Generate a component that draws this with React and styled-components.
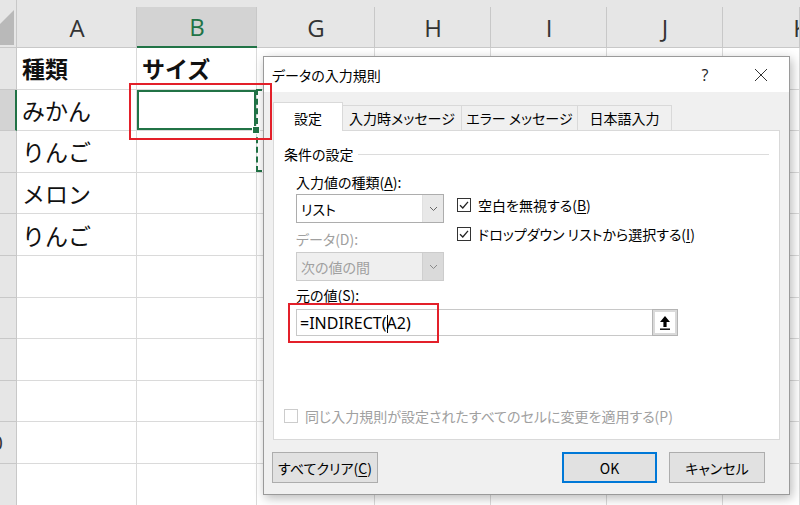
import React from 'react';
import styled, { createGlobalStyle, css } from 'styled-components';

const GlobalStyle = createGlobalStyle`
  html, body { margin: 0; padding: 0; background: #fff; overflow: hidden; }
`;

const Screen = styled.div`
  position: relative;
  width: 800px;
  height: 505px;
  overflow: hidden;
  font-family: "Noto Sans CJK JP", "Noto Sans", sans-serif;
`;

// ---- spreadsheet ----
const Sheet = styled.div`
  display: grid;
  grid-template-columns: 17px 120px 120px 118px 116px 116px 116px 1fr;
  grid-template-rows: 48px repeat(11, 41.6px);
`;

const Corner = styled.div`
  background: #e6e6e6;
  border-right: 1px solid #c8c8c8;
  border-bottom: 1px solid #c8c8c8;
  box-sizing: border-box;
  svg { display: block; }
`;

const ColHead = styled.div`
  position: relative;
  display: flex;
  align-items: center;
  justify-content: center;
  padding-top: 7px;
  box-sizing: border-box;
  background: linear-gradient(#e6e6e6 7px, ${p => (p.$active ? '#d3d3d3' : '#e6e6e6')} 7px);
  border-bottom: ${p => (p.$active ? '2px solid #217346' : '1px solid #c8c8c8')};
  color: ${p => (p.$active ? '#217346' : '#333')};
  font: 24px "Open Sans", "Liberation Sans", sans-serif;
  &::after {
    content: '';
    position: absolute;
    right: 0;
    top: 7px;
    bottom: 0;
    width: 1px;
    background: #c8c8c8;
  }
`;

const RowHead = styled.div`
  display: flex;
  align-items: center;
  justify-content: flex-end;
  padding-right: 13px;
  overflow: hidden;
  white-space: nowrap;
  box-sizing: border-box;
  background: ${p => (p.$active ? '#d3d3d3' : '#e6e6e6')};
  border-bottom: 1px solid #c8c8c8;
  border-right: ${p => (p.$active ? '2px solid #217346' : '1px solid #c8c8c8')};
  font: 20px "Open Sans", "Liberation Sans", sans-serif;
  color: #333;
`;

const Cell = styled.div`
  position: relative;
  display: flex;
  align-items: center;
  padding-left: 5px;
  box-sizing: border-box;
  border-right: 1px solid #dadada;
  border-bottom: 1px solid #dadada;
  font-size: 23px;
  font-weight: ${p => (p.$bold ? 700 : 400)};
  color: #111;
  white-space: nowrap;
  ${p => p.$selected && css`
    box-shadow: inset 0 0 0 2px #217346;
    &::after {
      content: '';
      position: absolute;
      right: -4px;
      bottom: -4px;
      width: 6px;
      height: 6px;
      background: #217346;
      border: 1px solid #fff;
      z-index: 2;
    }
  `}
`;

const Marquee = styled.div`
  position: absolute;
  left: 256px;
  top: 89px;
  width: 130px;
  height: 83px;
  border: 2px dashed #217346;
  box-sizing: border-box;
`;

const RedBox = styled.div`
  position: absolute;
  left: ${p => p.$x}px;
  top: ${p => p.$y}px;
  width: ${p => p.$w}px;
  height: ${p => p.$h}px;
  border: 2px solid #e3202a;
  box-sizing: border-box;
  z-index: 5;
`;

// ---- dialog ----
const Dialog = styled.div`
  position: absolute;
  left: 263px;
  top: 56px;
  width: 527px;
  height: 439px;
  box-sizing: border-box;
  border: 1px solid #9a9a9a;
  background: #f0f0f0;
  box-shadow: 2px 3px 10px rgba(0, 0, 0, 0.28);
  display: flex;
  flex-direction: column;
  font-size: 14px;
  font-feature-settings: "palt";
  color: #000;
  z-index: 3;
`;

const TitleBar = styled.div`
  height: 35px;
  background: #fff;
  display: flex;
  align-items: center;
  padding-left: 8px;
  flex-shrink: 0;
`;

const Title = styled.div`
  flex: 1;
  font-size: 14px;
`;

const TitleBtn = styled.div`
  width: 56px;
  height: 35px;
  display: flex;
  align-items: center;
  justify-content: center;
  font: 16px "Open Sans", sans-serif;
  color: #222;
`;

const Body = styled.div`
  flex: 1;
  display: flex;
  flex-direction: column;
  padding: 11px 9px 10px 9px;
`;

const Tabs = styled.div`
  display: flex;
  align-items: flex-end;
  height: 28px;
  position: relative;
  z-index: 1;
  margin-bottom: -1px;
`;

const Tab = styled.div`
  width: ${p => p.$w}px;
  height: ${p => (p.$active ? 29 : 26)}px;
  box-sizing: border-box;
  display: flex;
  align-items: center;
  justify-content: center;
  background: ${p => (p.$active ? '#fff' : '#f0f0f0')};
  border: 1px solid #d9d9d9;
  border-bottom: ${p => (p.$active ? 'none' : '1px solid #d9d9d9')};
  border-left-width: ${p => (p.$first ? 1 : 0)}px;
  font-size: 14px;
  padding-top: ${p => (p.$active ? 1 : 0)}px;
`;

const Panel = styled.div`
  height: 310px;
  box-sizing: border-box;
  background: #fff;
  border: 1px solid #d9d9d9;
  padding: 13px 10px 13px 10px;
  display: flex;
  flex-direction: column;
`;

const GroupTitle = styled.div`
  display: flex;
  align-items: center;
  gap: 4px;
  height: 20px;
  &::after {
    content: '';
    flex: 1;
    height: 1px;
    background: #dcdcdc;
    margin-right: 0;
  }
`;

const Indent = styled.div`
  padding-left: 12px;
  display: flex;
  flex-direction: column;
`;

const FieldLabel = styled.div`
  height: 20px;
  line-height: 20px;
  margin-top: ${p => p.$mt}px;
  color: ${p => (p.$disabled ? '#a0a0a0' : '#000')};
  u { text-decoration: underline; text-underline-offset: 2px; }
`;

const TypeRow = styled.div`
  display: flex;
  gap: 13px;
  margin-top: 2px;
`;

const LeftCol = styled.div`
  width: 148px;
  display: flex;
  flex-direction: column;
`;

const Combo = styled.div`
  height: 29px;
  box-sizing: border-box;
  display: flex;
  border: 1px solid ${p => (p.$disabled ? '#cccccc' : '#adadad')};
  background: ${p => (p.$disabled ? '#efefef' : '#fff')};
  color: ${p => (p.$disabled ? '#a0a0a0' : '#000')};
  margin-top: ${p => p.$mt || 0}px;
`;

const ComboText = styled.div`
  flex: 1;
  display: flex;
  align-items: center;
  padding-left: 4px;
`;

const ComboArrow = styled.div`
  width: 20px;
  display: flex;
  align-items: center;
  justify-content: center;
  background: ${p => (p.$disabled ? '#dadada' : '#e8e8e8')};
  border-left: 1px solid ${p => (p.$disabled ? '#cfcfcf' : '#e0e0e0')};
`;

const Checks = styled.div`
  display: flex;
  flex-direction: column;
  gap: 9px;
  margin-top: 1px;
`;

const CheckRow = styled.div`
  display: flex;
  align-items: center;
  gap: 7px;
  height: 20px;
  color: ${p => (p.$disabled ? '#a0a0a0' : '#000')};
  white-space: nowrap;
  u { text-decoration: underline; text-underline-offset: 2px; }
`;

const Box = styled.div`
  width: 14px;
  height: 14px;
  box-sizing: border-box;
  border: 1px solid ${p => (p.$disabled ? '#cccccc' : '#333')};
  background: #fff;
  display: flex;
  align-items: center;
  justify-content: center;
`;

const SourceRow = styled.div`
  display: flex;
  margin-top: 4px;
  height: 27px;
`;

const SourceInput = styled.div`
  width: 356px;
  box-sizing: border-box;
  border: 1px solid #c8c8c8;
  border-right: none;
  display: flex;
  align-items: center;
  padding-left: 3px;
  font: 16px "Noto Sans", "Liberation Sans", sans-serif;
  color: #000;
`;

const Caret = styled.span`
  display: inline-block;
  width: 1px;
  height: 18px;
  background: #000;
  vertical-align: middle;
  margin: 0 -1px 0 0;
`;

const RefButton = styled.div`
  width: 26px;
  box-sizing: border-box;
  border: 1px solid #b4b4b4;
  box-shadow: inset 0 0 0 2px #dadada;
  background: #fff;
  display: flex;
  align-items: center;
  justify-content: center;
`;

const Bottom = styled.div`
  margin-top: auto;
`;

const Footer = styled.div`
  display: flex;
  gap: 12px;
  margin: 12px 15px 0 -1px;
`;

const Button = styled.div`
  width: ${p => p.$w}px;
  height: 31px;
  box-sizing: border-box;
  display: flex;
  align-items: center;
  justify-content: center;
  background: #e1e1e1;
  border: ${p => (p.$primary ? '2px solid #0078d7' : '1px solid #adadad')};
  margin-left: ${p => (p.$push ? 'auto' : '0')};
  font-size: 14px;
  u { text-decoration: underline; text-underline-offset: 2px; }
`;

const Chevron = ({ color }) => (
  <svg width="9" height="6" viewBox="0 0 9 6">
    <polyline points="1,1 4.5,4.5 8,1" fill="none" stroke={color} strokeWidth="1" />
  </svg>
);

const Tick = () => (
  <svg width="12" height="12" viewBox="0 0 12 12">
    <polyline points="2,6.2 4.8,9 10,2.8" fill="none" stroke="#222" strokeWidth="1.3" />
  </svg>
);

const CloseIcon = () => (
  <svg width="14" height="14" viewBox="0 0 14 14">
    <line x1="1" y1="1" x2="13" y2="13" stroke="#333" strokeWidth="1" />
    <line x1="13" y1="1" x2="1" y2="13" stroke="#333" strokeWidth="1" />
  </svg>
);

const UpArrow = () => (
  <svg width="12" height="16" viewBox="0 0 12 16">
    <polygon points="6,1 11,7 7.6,7 7.6,12 4.4,12 4.4,7 1,7" fill="#000" />
    <rect x="1" y="13.5" width="10" height="1.4" fill="#000" />
  </svg>
);

const columns = [
  { key: 'A', w: 'A' },
  { key: 'B', w: 'B', active: true },
  { key: 'G' },
  { key: 'H' },
  { key: 'I' },
  { key: 'J' },
  { key: 'K' },
];

const rows = [
  { a: '種類', b: 'サイズ', bold: true },
  { a: 'みかん', active: true },
  { a: 'りんご' },
  { a: 'メロン' },
  { a: 'りんご' },
  {}, {}, {}, {}, {}, {},
];

const tabs = [
  { label: '設定', w: 70, active: true },
  { label: '入力時メッセージ', w: 119 },
  { label: 'エラー メッセージ', w: 116 },
  { label: '日本語入力', w: 94 },
];

export default function App() {
  return (
    <Screen>
      <GlobalStyle />
      <Sheet>
        <Corner>
          <svg width="16" height="47" viewBox="0 0 16 47">
            <polygon points="14,10 14,45 0,45 0,24" fill="#b9b9b9" />
          </svg>
        </Corner>
        {columns.map(c => (
          <ColHead key={c.key} $active={c.active}>
            {c.key === 'K' ? <span style={{ marginLeft: 'auto', marginRight: '-8px' }}>K</span> : c.key}
          </ColHead>
        ))}
        {rows.map((r, i) => (
          <React.Fragment key={i}>
            <RowHead $active={r.active}>{i + 1 >= 10 ? i + 1 : ''}</RowHead>
            <Cell $bold={r.bold}>{r.a}</Cell>
            <Cell $bold={r.bold} $selected={r.active}>{r.b}</Cell>
            <Cell />
            <Cell />
            <Cell />
            <Cell />
            <Cell />
          </React.Fragment>
        ))}
      </Sheet>
      <Marquee />

      <Dialog>
        <TitleBar>
          <Title>データの入力規則</Title>
          <TitleBtn>?</TitleBtn>
          <TitleBtn><CloseIcon /></TitleBtn>
        </TitleBar>
        <Body>
          <Tabs>
            {tabs.map((t, i) => (
              <Tab key={t.label} $w={t.w} $active={t.active} $first={i === 0}>{t.label}</Tab>
            ))}
          </Tabs>
          <Panel>
            <GroupTitle>条件の設定</GroupTitle>
            <Indent>
              <FieldLabel $mt={8}>入力値の種類(<u>A</u>):</FieldLabel>
              <TypeRow>
                <LeftCol>
                  <Combo>
                    <ComboText>リスト</ComboText>
                    <ComboArrow><Chevron color="#666" /></ComboArrow>
                  </Combo>
                  <FieldLabel $mt={6} $disabled>データ(D):</FieldLabel>
                  <Combo $disabled $mt={3}>
                    <ComboText>次の値の間</ComboText>
                    <ComboArrow $disabled><Chevron color="#8a8a8a" /></ComboArrow>
                  </Combo>
                </LeftCol>
                <Checks>
                  <CheckRow>
                    <Box><Tick /></Box>
                    <span>空白を無視する(<u>B</u>)</span>
                  </CheckRow>
                  <CheckRow>
                    <Box><Tick /></Box>
                    <span>ドロップダウン リストから選択する(<u>I</u>)</span>
                  </CheckRow>
                </Checks>
              </TypeRow>
              <FieldLabel $mt={4}>元の値(<u>S</u>):</FieldLabel>
              <SourceRow>
                <SourceInput>
                  <span>=INDIRECT(<Caret />A2)</span>
                </SourceInput>
                <RefButton><UpArrow /></RefButton>
              </SourceRow>
            </Indent>
            <Bottom>
              <CheckRow $disabled>
                <Box $disabled />
                <span>同じ入力規則が設定されたすべてのセルに変更を適用する(P)</span>
              </CheckRow>
            </Bottom>
          </Panel>
          <Footer>
            <Button $w={106}>すべてクリア(<u>C</u>)</Button>
            <Button $w={95} $primary $push>OK</Button>
            <Button $w={96}>キャンセル</Button>
          </Footer>
        </Body>
      </Dialog>

      <RedBox $x={129} $y={83} $w={143} $h={57} />
      <RedBox $x={288} $y={303} $w={151} $h={40} />
    </Screen>
  );
}
